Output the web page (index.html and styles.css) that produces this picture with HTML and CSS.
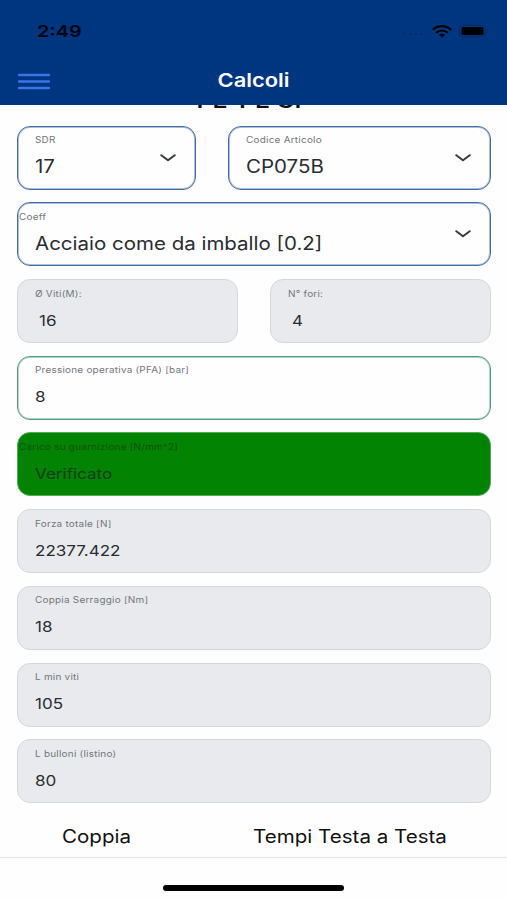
FILE: index.html
```html
<!DOCTYPE html>
<html lang="it">
<head>
<meta charset="utf-8">
<title>Calcoli</title>
<link rel="stylesheet" href="styles.css">
</head>
<body>
<div class="app">
  <header class="header">
    <div class="status">
      <span class="time">2:49</span>
      <div class="indicators">
        <svg class="signal" width="24" height="4" viewBox="0 0 24 4"><path d="M2 2h2M8 2h2M14 2h2M20 2h2" stroke="#062a66" stroke-width="1.5"/></svg>
        <svg class="wifi" width="20" height="13" viewBox="0 0 20 13" fill="none" stroke="#000"><path d="M.9 4.9C6-.1 14-.1 19.1 4.9" stroke-width="2.3"/><path d="M4.3 7.8c3.2-3.1 8.2-3.1 11.4 0" stroke-width="2.1"/><path d="M7 9.8c1.700-1.500 4.300-1.500 6 0L10 12.500Z" fill="#000" stroke="none"/></svg>
        <svg class="battery" width="31" height="12" viewBox="0 0 31 12"><rect x=".5" y=".5" width="26" height="11" rx="3" fill="none" stroke="#052b67"/><rect x="2.500" y="2" width="22" height="8" rx="1.500"/><path d="M28.300 4v4c2-1 2-3 0-4Z" fill="#052b67"/></svg>
      </div>
    </div>
    <nav class="navbar">
      <svg class="menu" width="32" height="17" viewBox="0 0 32 17"><path d="M1 2h30M1 8.500h30M1 15h30" stroke="#3975e8" stroke-width="2.300" stroke-linecap="round"/></svg>
      <h1 class="title">Calcoli</h1>
    </nav>
  </header>
  <main class="content">
    <h2 class="section">PE-PE CP</h2>
    <div class="fields">
      <div class="row row-select">
        <div class="field select"><span class="label">SDR</span><span class="value">17</span><svg class="chevron" viewBox="0 0 16 8"><path d="M1.300 1.200 8 6.200l6.700-5"/></svg></div>
        <div class="field select"><span class="label">Codice Articolo</span><span class="value">CP075B</span><svg class="chevron" viewBox="0 0 16 8"><path d="M1.300 1.200 8 6.200l6.700-5"/></svg></div>
      </div>
      <div class="field select flush"><span class="label">Coeff</span><span class="value">Acciaio come da imballo [0.2]</span><svg class="chevron" viewBox="0 0 16 8"><path d="M1.300 1.200 8 6.200l6.700-5"/></svg></div>
      <div class="row row-half">
        <div class="field indent"><span class="label">Ø Viti(M):</span><span class="value">16</span></div>
        <div class="field indent"><span class="label">N° fori:</span><span class="value">4</span></div>
      </div>
      <div class="field valid"><span class="label">Pressione operativa (PFA) [bar]</span><span class="value">8</span></div>
      <div class="field verified flush"><span class="label">Carico su guarnizione [N/mm^2]</span><span class="value">Verificato</span></div>
      <div class="field"><span class="label">Forza totale [N]</span><span class="value">22377.422</span></div>
      <div class="field"><span class="label">Coppia Serraggio [Nm]</span><span class="value">18</span></div>
      <div class="field"><span class="label">L min viti</span><span class="value">105</span></div>
      <div class="field"><span class="label">L bulloni (listino)</span><span class="value">80</span></div>
    </div>
  </main>
  <div class="tabs"><span class="tab">Coppia</span><span class="tab">Tempi Testa a Testa</span></div>
  <footer class="home"><div class="bar"></div></footer>
</div>
</body>
</html>
```
FILE: styles.css
```css
* { box-sizing: border-box; }
body { margin: 0; background: #fefefe; font-family: Inter, "Liberation Sans", sans-serif; color: #292d31; }
.app { width: 507px; height: 900px; display: flex; flex-direction: column; overflow: hidden; }
.header { height: 105px; flex: none; background: #00367f; }
.status { height: 62px; padding: 0 17px 0 37px; display: flex; justify-content: space-between; align-items: center; }
.time { font-size: 16px; font-weight: 600; line-height: 20px; color: #00040a; transform: scaleX(1.240); transform-origin: left; }
.indicators { display: flex; align-items: center; }
.signal { margin: 6px 7px 0 0; }
.wifi { margin-right: 7px; }
.navbar { height: 38px; padding: 0 18px; display: grid; grid-template-columns: 32px 1fr 32px; align-items: center; }
.title { margin: 0; text-align: center; color: #fff; font-size: 19px; line-height: 24px; font-weight: 600; transform: scaleX(1.150); }
.content { height: 713px; flex: none; overflow: hidden; }
.section { margin: 0 0 13.700px; height: 7px; display: flex; align-items: flex-end; justify-content: center; line-height: 22px; font-size: 20px; font-weight: 600; color: #111; transform: scaleX(1.240); }
.fields { padding: 0 16.500px; display: flex; flex-direction: column; gap: 12.700px; }
.row { display: grid; gap: 32px; }
.row-select { grid-template-columns: 179px 1fr; }
.row-half { grid-template-columns: 1fr 1fr; }
.field { position: relative; height: 64px; padding: 8.500px 17px 0 17.500px; border: 1px solid #d5d8da; border-radius: 13px; background: #e8eaed; }
.label { display: block; height: 10px; line-height: 10px; font-size: 8.500px; color: #73777b; letter-spacing: .2px; white-space: nowrap; width: max-content; transform: scaleX(1.170); transform-origin: left; }
.value { display: block; margin-top: 12px; line-height: 20px; font-size: 14.500px; white-space: nowrap; width: max-content; transform: scaleX(1.175); transform-origin: left; }
.select { background: #fefefe; border-color: #426ba7; box-shadow: inset 0 0 0 1px #426ba770; }
.select .value { font-size: 18px; transform: scaleX(1.138); }
.chevron { position: absolute; right: 19px; top: 27px; width: 16px; height: 8px; fill: none; stroke: #343a40; stroke-width: 2; stroke-linecap: round; stroke-linejoin: round; }
.flush .label { margin-left: -16.500px; }
.indent .value { margin-left: 4px; }
.valid { background: #fefefe; border-color: #4e9f7c; box-shadow: inset 0 0 0 1px #4e9f7c70; }
.verified { background: #028302; border-color: #56a956; }
.verified .label { color: #194e19; }
.verified .value { color: #153c1a; }
.tabs { height: 40px; flex: none; display: flex; border-bottom: 1px solid #e0e5e6; }
.tab { height: 36px; line-height: 37px; text-align: center; font-size: 18px; color: #111; transform: scaleX(1.142); }
.tab:first-child { width: 193px; }
.tab:last-child { width: 314px; }
.home { flex: 1; padding-top: 27px; }
.bar { width: 181px; height: 6px; margin: 0 auto; border-radius: 3px; background: #000; }
```
